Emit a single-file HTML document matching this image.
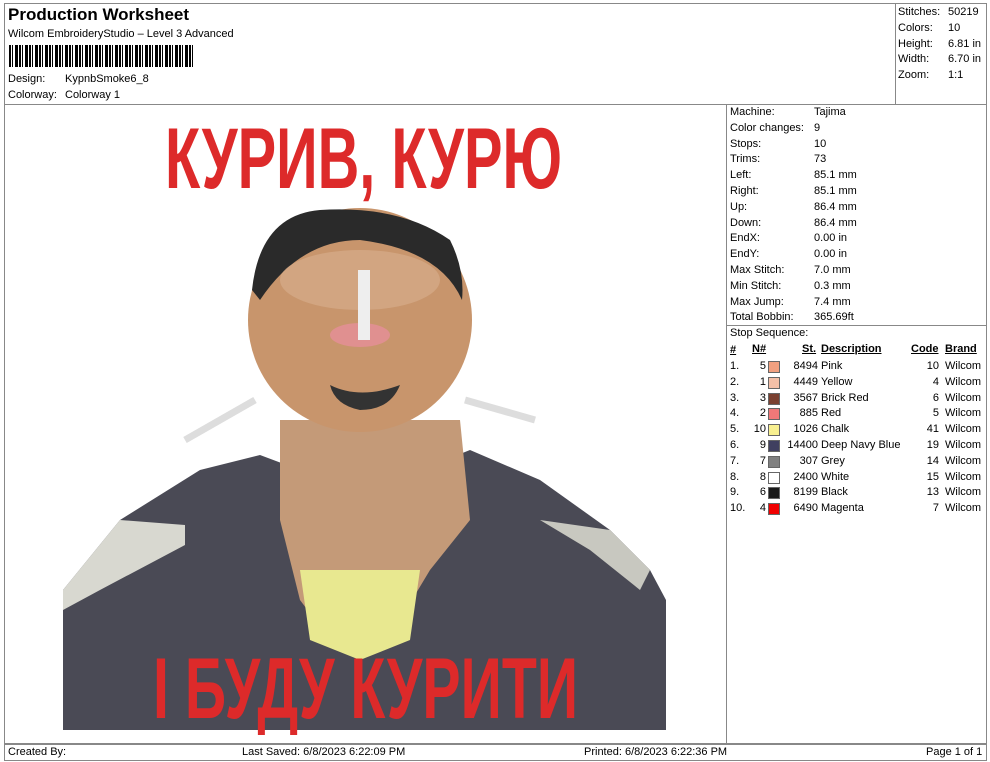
<!DOCTYPE html>
<html><head><meta charset="utf-8"><style>
body{margin:0;width:990px;height:762px;background:#fff;font-family:"Liberation Sans",Arial,sans-serif;color:#000;position:relative;overflow:hidden;font-size:11px}
.a{position:absolute;white-space:nowrap}
.b{position:absolute;border:1px solid #888}
</style></head><body>
<div class="b" style="left:4px;top:3px;width:981px;height:756px"></div>
<div class="a" style="left:4px;top:104px;width:982px;border-top:1px solid #888"></div>
<div class="a" style="left:895px;top:3px;height:101px;border-left:1px solid #888"></div>
<div class="a" style="left:726px;top:104px;height:639px;border-left:1px solid #888"></div>
<div class="a" style="left:726px;top:325px;width:260px;border-top:1px solid #888"></div>
<div class="a" style="left:4px;top:743px;width:982px;border-top:2px solid #888"></div>

<div class="a" style="left:8px;top:5px;font-size:17px;font-weight:bold">Production Worksheet</div>
<div class="a" style="left:8px;top:28px">Wilcom EmbroideryStudio – Level 3 Advanced</div>
<div class="a" style="left:9px;top:45px;width:185px;height:22px;background:repeating-linear-gradient(90deg,#000 0 2px,#fff 2px 3px,#000 3px 4px,#fff 4px 6px,#000 6px 9px,#fff 9px 10px)"></div>
<div class="a" style="left:8px;top:73px">Design:</div><div class="a" style="left:65px;top:73px">KypnbSmoke6_8</div>
<div class="a" style="left:8px;top:89px">Colorway:</div><div class="a" style="left:65px;top:89px">Colorway 1</div>

<div class="a" style="left:898px;top:5px;line-height:15.8px">Stitches:<br>Colors:<br>Height:<br>Width:<br>Zoom:</div>
<div class="a" style="left:948px;top:5px;line-height:15.8px">50219<br>10<br>6.81 in<br>6.70 in<br>1:1</div>

<div class="a" style="left:730px;top:105px;line-height:15.8px">Machine:<br>Color changes:<br>Stops:<br>Trims:<br>Left:<br>Right:<br>Up:<br>Down:<br>EndX:<br>EndY:<br>Max Stitch:<br>Min Stitch:<br>Max Jump:<br>Total Bobbin:<br>Stop Sequence:</div>
<div class="a" style="left:814px;top:105px;line-height:15.8px">Tajima<br>9<br>10<br>73<br>85.1 mm<br>85.1 mm<br>86.4 mm<br>86.4 mm<br>0.00 in<br>0.00 in<br>7.0 mm<br>0.3 mm<br>7.4 mm<br>365.69ft</div>

<div class="a" style="left:730px;top:343px;line-height:15.8px;font-weight:bold;text-decoration:underline">#</div>
<div class="a" style="left:752px;top:343px;font-weight:bold;text-decoration:underline">N#</div>
<div class="a" style="left:802px;top:343px;font-weight:bold;text-decoration:underline">St.</div>
<div class="a" style="left:821px;top:343px;font-weight:bold;text-decoration:underline">Description</div>
<div class="a" style="left:911px;top:343px;font-weight:bold;text-decoration:underline">Code</div>
<div class="a" style="left:945px;top:343px;font-weight:bold;text-decoration:underline">Brand</div>
<div class="a" style="left:730px;top:359px;line-height:15.8px">1.<br>2.<br>3.<br>4.<br>5.<br>6.<br>7.<br>8.<br>9.<br>10.</div>
<div class="a" style="left:746px;top:359px;line-height:15.8px;width:20px;text-align:right">5<br>1<br>3<br>2<br>10<br>9<br>7<br>8<br>6<br>4</div>
<div class="a" style="left:768px;top:359px;width:14px">
<div style="height:10px;width:10px;margin:2px 0 3.8px;border:1px solid #666;background:#f0a080"></div>
<div style="height:10px;width:10px;margin:0 0 3.8px;border:1px solid #666;background:#f4c0a8"></div>
<div style="height:10px;width:10px;margin:0 0 3.8px;border:1px solid #666;background:#7a4030"></div>
<div style="height:10px;width:10px;margin:0 0 3.8px;border:1px solid #666;background:#f07878"></div>
<div style="height:10px;width:10px;margin:0 0 3.8px;border:1px solid #666;background:#f8f090"></div>
<div style="height:10px;width:10px;margin:0 0 3.8px;border:1px solid #666;background:#404060"></div>
<div style="height:10px;width:10px;margin:0 0 3.8px;border:1px solid #666;background:#808080"></div>
<div style="height:10px;width:10px;margin:0 0 3.8px;border:1px solid #666;background:#fff"></div>
<div style="height:10px;width:10px;margin:0 0 3.8px;border:1px solid #666;background:#1a1a1a"></div>
<div style="height:10px;width:10px;margin:0 0 3.8px;border:1px solid #666;background:#f00000"></div></div>
<div class="a" style="left:780px;top:359px;line-height:15.8px;width:38px;text-align:right">8494<br>4449<br>3567<br>885<br>1026<br>14400<br>307<br>2400<br>8199<br>6490</div>
<div class="a" style="left:821px;top:359px;line-height:15.8px">Pink<br>Yellow<br>Brick Red<br>Red<br>Chalk<br>Deep Navy Blue<br>Grey<br>White<br>Black<br>Magenta</div>
<div class="a" style="left:900px;top:359px;line-height:15.8px;width:39px;text-align:right">10<br>4<br>6<br>5<br>41<br>19<br>14<br>15<br>13<br>7</div>
<div class="a" style="left:945px;top:359px;line-height:15.8px">Wilcom<br>Wilcom<br>Wilcom<br>Wilcom<br>Wilcom<br>Wilcom<br>Wilcom<br>Wilcom<br>Wilcom<br>Wilcom</div>

<svg class="a" style="left:0;top:0" width="726" height="743">
<polygon points="63,590 120,520 200,470 260,455 300,470 420,470 470,450 540,480 610,530 650,570 666,600 666,730 63,730" fill="#4a4a55"/>
<polygon points="63,590 120,520 185,525 185,545 100,590 63,610" fill="#d8d8d0"/>
<polygon points="540,520 610,530 650,570 640,590 590,550" fill="#c8c8c0"/>
<polygon points="280,420 460,420 470,520 430,570 400,620 330,640 300,600 280,520" fill="#c49a78"/>
<polygon points="300,570 420,570 410,640 360,660 310,640" fill="#e8e890"/>
<ellipse cx="360" cy="320" rx="112" ry="112" fill="#c8956c"/>
<path d="M252,290 Q260,215 320,210 Q400,205 450,240 Q465,270 462,300 Q440,250 360,240 Q300,240 260,300Z" fill="#2a2a2a"/>
<ellipse cx="360" cy="280" rx="80" ry="30" fill="#d8b090" opacity=".6"/>
<path d="M330,385 Q360,400 400,385 Q390,410 360,410 Q335,405 330,385Z" fill="#333"/>
<ellipse cx="360" cy="335" rx="30" ry="12" fill="#e09090"/>
<rect x="358" y="270" width="12" height="70" fill="#eee"/>
<line x1="185" y1="440" x2="255" y2="400" stroke="#ddd" stroke-width="7"/>
<line x1="465" y1="400" x2="535" y2="420" stroke="#ddd" stroke-width="7"/>
<g fill="#dd2a2a" font-family="Liberation Sans,sans-serif" font-weight="bold">
<text x="165" y="188" font-size="86" textLength="397" lengthAdjust="spacingAndGlyphs">КУРИВ, КУРЮ</text>
<text x="153" y="718" font-size="86" textLength="425" lengthAdjust="spacingAndGlyphs">І БУДУ КУРИТИ</text>
</g>
</svg>

<div class="a" style="left:8px;top:746px">Created By:</div>
<div class="a" style="left:242px;top:746px">Last Saved: 6/8/2023 6:22:09 PM</div>
<div class="a" style="left:584px;top:746px">Printed: 6/8/2023 6:22:36 PM</div>
<div class="a" style="left:926px;top:746px">Page 1 of 1</div>
</body></html>
